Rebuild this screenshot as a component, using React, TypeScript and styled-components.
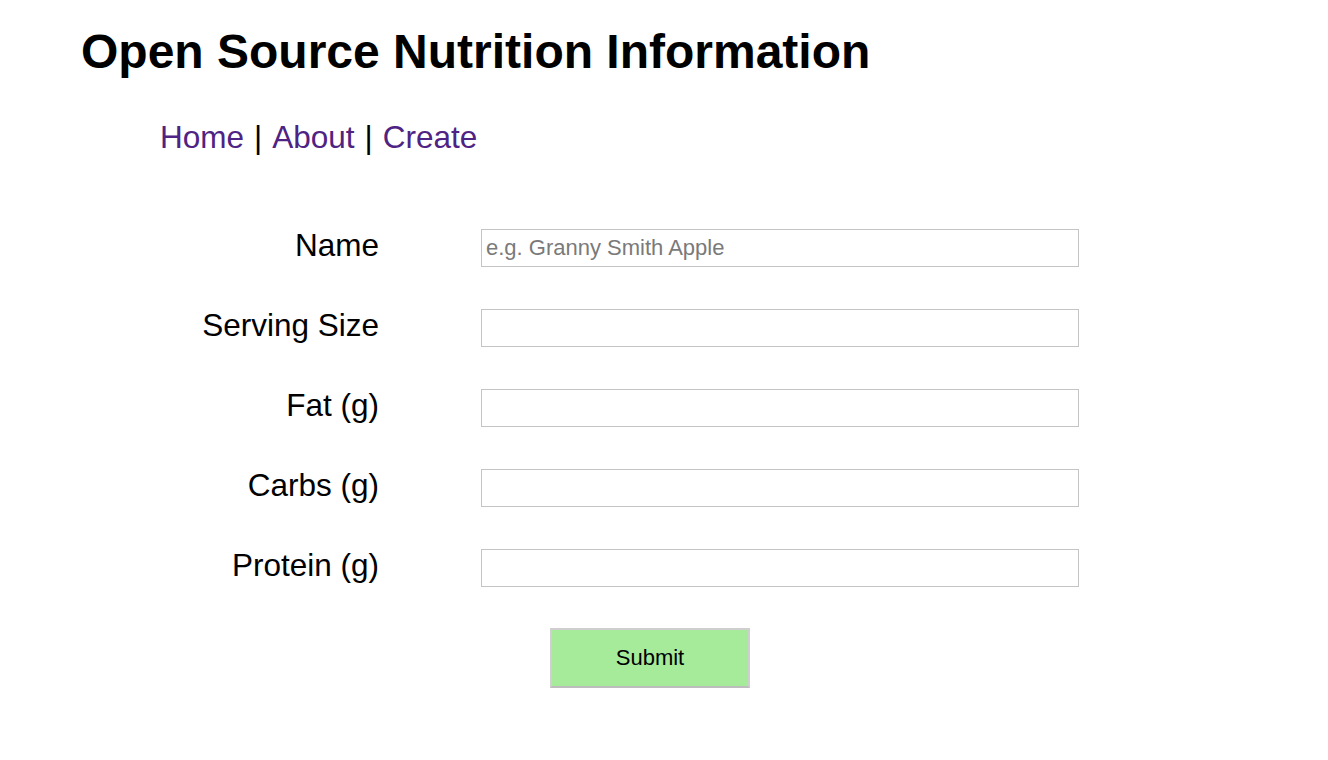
import React from "react";
import styled, { createGlobalStyle } from "styled-components";

const GlobalStyle = createGlobalStyle`
  html, body {
    margin: 0;
    padding: 0;
    background: #ffffff;
    font-family: "Liberation Sans", Arial, Helvetica, sans-serif;
  }
`;

const Page = styled.div`
  padding: 26px 0 0 81px;
  font-family: "Liberation Sans", Arial, Helvetica, sans-serif;
  color: #000;
`;

const Title = styled.h1`
  margin: 0;
  font-size: 48px;
  line-height: 52px;
  font-weight: bold;
`;

const Nav = styled.nav`
  margin: 41px 0 0 79px;
  font-size: 31.5px;
  line-height: 36px;
  display: flex;
  gap: 10px;
  align-items: baseline;
`;

const NavLink = styled.a`
  color: #4f2383;
  text-decoration: none;
`;

const Sep = styled.span`
  color: #000;
`;

const Form = styled.form`
  margin: 74px 0 0 79px;
  display: flex;
  flex-direction: column;
`;

const Grid = styled.div`
  display: grid;
  grid-template-columns: 219px 598px;
  grid-auto-rows: 38px;
  column-gap: 102px;
  row-gap: 42px;
`;

const Label = styled.label`
  align-self: start;
  text-align: right;
  font-size: 31.5px;
  line-height: 32px;
`;

const Input = styled.input`
  box-sizing: border-box;
  width: 598px;
  height: 38px;
  border: 1px solid #c4c4c4;
  border-radius: 0;
  padding: 0 4px;
  font-family: "Liberation Sans", Arial, Helvetica, sans-serif;
  font-size: 22px;
  color: #000;
  outline: none;
  &::placeholder {
    color: #7a7a7a;
  }
`;

const SubmitButton = styled.button`
  box-sizing: border-box;
  margin: 41px 0 0 390px;
  width: 200px;
  height: 60px;
  background: #a6eb9a;
  border: 2px solid #cfcfcf;
  border-bottom-color: #bdbdbd;
  font-family: "Liberation Sans", Arial, Helvetica, sans-serif;
  font-size: 22px;
  color: #000;
  padding: 0;
  cursor: pointer;
`;

const fields = [
  { label: "Name", placeholder: "e.g. Granny Smith Apple" },
  { label: "Serving Size", placeholder: "" },
  { label: "Fat (g)", placeholder: "" },
  { label: "Carbs (g)", placeholder: "" },
  { label: "Protein (g)", placeholder: "" },
];

export default function App() {
  return (
    <>
      <GlobalStyle />
      <Page>
        <Title>Open Source Nutrition Information</Title>
        <Nav>
          <NavLink href="#">Home</NavLink>
          <Sep>|</Sep>
          <NavLink href="#">About</NavLink>
          <Sep>|</Sep>
          <NavLink href="#">Create</NavLink>
        </Nav>
        <Form onSubmit={(e) => e.preventDefault()}>
          <Grid>
            {fields.map((f) => (
              <React.Fragment key={f.label}>
                <Label>{f.label}</Label>
                <Input placeholder={f.placeholder} />
              </React.Fragment>
            ))}
          </Grid>
          <div>
            <SubmitButton type="submit">Submit</SubmitButton>
          </div>
        </Form>
      </Page>
    </>
  );
}
